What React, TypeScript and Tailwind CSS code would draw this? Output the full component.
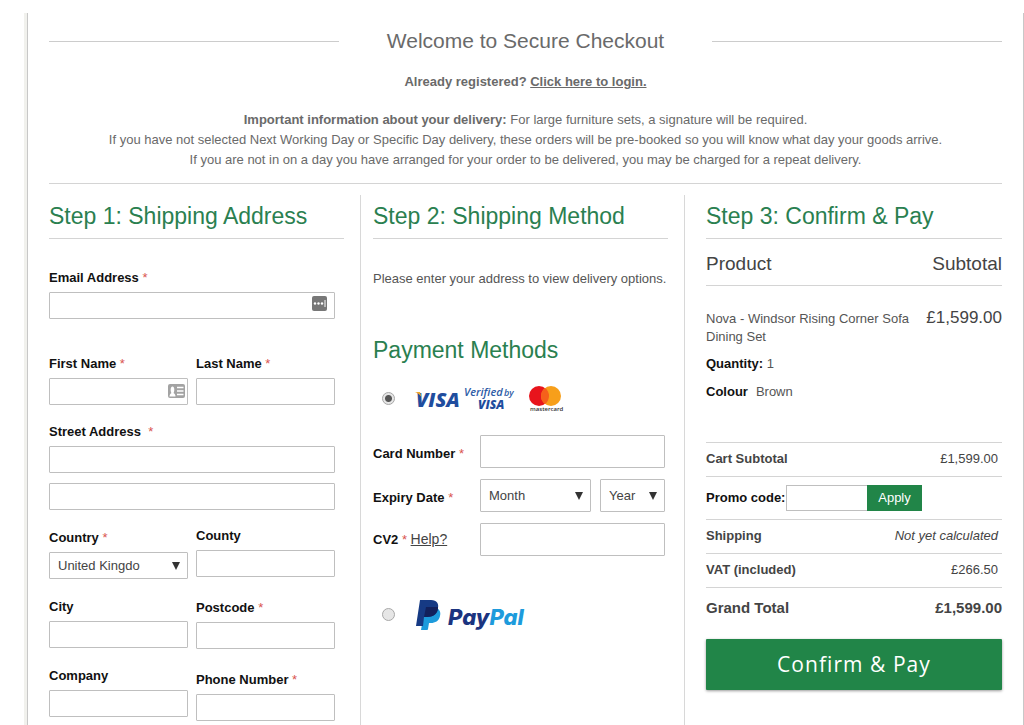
import { useState } from "react";
import type { ReactNode } from "react";

const inputClass = "block w-full border border-[#bfbfbf] rounded-[1px] bg-white px-2 text-[13px] text-[#444] outline-none";

function Star() {
  return <span className="font-normal text-[#d9534f]"> *</span>;
}

function Field({ id, label, required, children }: { id: string; label: string; required?: boolean; children?: ReactNode }) {
  return (
    <div>
      <label htmlFor={id} className="block mb-1 font-bold leading-5 text-[#111]">
        {label}
        {required && <Star />}
      </label>
      <div className="relative">{children || <input id={id} type="text" className={`${inputClass} h-[27px]`} />}</div>
    </div>
  );
}

function Select({ id, label, value, className }: { id: string; label?: string; value: string; className: string }) {
  return (
    <div className="relative">
      <select id={id} aria-label={label} className={`${inputClass} appearance-none ${className}`}>
        <option>{value}</option>
      </select>
      <svg viewBox="0 0 8 8" className="absolute right-2 top-1/2 -mt-1 size-2 pointer-events-none" fill="#333">
        <path d="M0 0h8L4 8z" />
      </svg>
    </div>
  );
}

function StepTitle({ children }: { children: ReactNode }) {
  return <h2 className="border-b border-[#d4d4d4] text-[23px] leading-[43px] text-[#2a8050] whitespace-nowrap">{children}</h2>;
}

function CardLogos() {
  return (
    <svg width="150" height="32" viewBox="0 0 150 32" role="img" aria-label="Visa, Verified by Visa, Mastercard" fontFamily="'Open Sans', sans-serif" fontStyle="italic">
      <text x="1" y="25" fontSize="20" fontWeight="800" fill="#1f4d9e">VISA</text>
      <path d="M0 10h5l2 7C6 13 3 11 0 10z" fill="#f0a92c" />
      <text x="49" y="14" fontSize="11" fontWeight="600" fill="#2b5aa5">Verified</text>
      <text x="89" y="14" fontSize="9" fontWeight="600" fill="#2b5aa5">by</text>
      <text x="63" y="27" fontSize="12" fontWeight="800" fill="#1f4d9e">VISA</text>
      <circle cx="124" cy="14" r="10" fill="#e8141c" />
      <circle cx="136" cy="14" r="10" fill="#f79f1a" />
      <path d="M130 6a10 10 0 0 1 0 16a10 10 0 0 1 0-16z" fill="#f5601b" />
      <text x="115" y="29" fontSize="6" fontWeight="600" fontStyle="normal" fill="#333">mastercard</text>
    </svg>
  );
}

function PayPalLogo() {
  return (
    <svg width="114" height="34" viewBox="0 0 114 34" role="img" aria-label="PayPal" fontFamily="Inter, sans-serif" fontStyle="italic">
      <path d="M10 11h11c4 1 5 5 4 8-1 5-5 7-9 7h-2l-1 6q0 1-1 1H6z" fill="#1d9bdc" />
      <path d="M5 3h11c6 0 8 4 7 8-1 6-5 9-11 9H9L8 29H1z" fill="#163a84" />
      <path d="M11 10h12c.5 6-4 10-11 10H9z" fill="#12215c" />
      <text x="33" y="28" fontSize="22" fontWeight="800" fill="#1b3480">
        Pay<tspan fill="#1d9bdc">Pal</tspan>
      </text>
    </svg>
  );
}

const radioClass =
  "appearance-none size-[13px] shrink-0 rounded-full border border-[#a8a8a8] bg-[#e6e6e6] checked:bg-[radial-gradient(circle,#555_0_3px,#e6e6e6_4px)]";

export default function CheckoutPage() {
  const [method, setMethod] = useState("card");

  return (
    <div className="pt-[13px] pl-[27px] bg-white font-['Liberation_Sans',Arial,sans-serif] text-[13px] text-[#555]">
      <main className="flex flex-col min-h-[calc(100vh-13px)] border-x border-[#c8c8c8] px-[21px] pt-[14px] shadow-[-3px_0_0_#f1f1ed]">
        <header className="border-b border-[#d4d4d4] pb-[13px] text-center leading-5 text-[#6a6a6a]">
          <div className="flex items-center">
            <div className="flex-1 border-t border-[#ccc]" />
            <h1 className="px-12 text-[21px] leading-7">Welcome to Secure Checkout</h1>
            <div className="flex-1 border-t border-[#ccc]" />
          </div>
          <p className="mt-[17px] font-bold">
            Already registered? <a href="#login" className="underline">Click here to login.</a>
          </p>
          <p className="mt-[18px]">
            <strong>Important information about your delivery:</strong> For large furniture sets, a signature will be required.
            <br />
            If you have not selected Next Working Day or Specific Day delivery, these orders will be pre-booked so you will know what day your goods arrive.
            <br />
            If you are not in on a day you have arranged for your order to be delivered, you may be charged for a repeat delivery.
          </p>
        </header>

        <div className="mt-[11px] grid flex-1 grid-cols-[312fr_324fr_317fr]">
          <section className="border-r border-[#d8d8d8] pr-4">
            <StepTitle>Step 1: Shipping Address</StepTitle>
            <div className="mt-[29px] pr-[9px]">
              <Field id="email" label="Email Address" required>
                <input id="email" type="email" className={`${inputClass} h-[27px]`} />
                <svg viewBox="0 0 15 15" className="absolute right-2 top-1 size-[15px]">
                  <rect width="15" height="15" rx="2" fill="#777" />
                  <circle cx="3" cy="7.500" r="1.200" fill="#fff" />
                  <circle cx="6.500" cy="7.500" r="1.200" fill="#fff" />
                  <circle cx="10" cy="7.500" r="1.200" fill="#fff" />
                  <path d="M13 4v7" stroke="#fff" />
                </svg>
              </Field>
              <div className="mt-[35px] grid grid-cols-2 gap-2">
                <Field id="first" label="First Name" required>
                  <input id="first" type="text" className={`${inputClass} h-[27px]`} />
                  <svg viewBox="0 0 17 14" className="absolute right-[3px] top-[6px] w-[17px] h-[14px]">
                    <rect width="17" height="14" rx="2" fill="#a3a3a3" />
                    <path d="M1.500 12.500c0-2 1-3 2-3.500-1-1-1.500-6.500 1-6.500s2 5.500 1 6.500c1 .5 2 1.500 2 3.500z" fill="#fff" />
                    <path d="M9 3.500h6.500M9 7h6.500M9 10.500h6.500" stroke="#fff" strokeWidth="1.500" />
                  </svg>
                </Field>
                <Field id="last" label="Last Name" required />
              </div>
              <div className="mt-[17px]">
                <Field id="street1" label={"Street Address\u00a0"} required />
                <input type="text" aria-label="Street Address line 2" className={`${inputClass} mt-[10px] h-[27px]`} />
              </div>
              {/* the two halves run as independent stacks */}
              <div className="grid grid-cols-2 gap-2">
                <div className="flex flex-col gap-[18px] pt-[18px]">
                  <Field id="country" label="Country" required>
                    <Select id="country" value="United Kingdo" className="h-[27px]" />
                  </Field>
                  <Field id="city" label="City" />
                  <Field id="company" label="Company" />
                </div>
                <div className="flex flex-col gap-[21px] pt-4">
                  <Field id="county" label="County" />
                  <Field id="postcode" label="Postcode" required />
                  <Field id="phone" label="Phone Number" required />
                </div>
              </div>
            </div>
          </section>

          <section className="border-r border-[#d8d8d8] pl-3 pr-4">
            <StepTitle>Step 2: Shipping Method</StepTitle>
            <p className="mt-[30px] leading-5 whitespace-nowrap">Please enter your address to view delivery options.</p>
            <h2 className="mt-[47px] text-[23px] leading-7 text-[#2a8050]">Payment Methods</h2>
            <label className="mt-[18px] flex items-center gap-5 pl-[9px]">
              <input type="radio" name="method" aria-label="Card" className={radioClass} checked={method === "card"} onChange={() => setMethod("card")} />
              <CardLogos />
            </label>
            <div className="mt-[21px] grid grid-cols-[107px_1fr] items-center gap-y-[11px] pr-[3px]">
              <label htmlFor="card" className="pt-1 font-bold text-[#111]">
                Card Number
                <Star />
              </label>
              <input id="card" type="text" className={`${inputClass} h-[33px]`} />
              <label htmlFor="month" className="pt-1 font-bold text-[#111]">
                Expiry Date
                <Star />
              </label>
              <div className="grid grid-cols-[111fr_65fr] gap-[9px]">
                <Select id="month" value="Month" className="h-[33px]" />
                <Select id="year" label="Expiry year" value="Year" className="h-[33px]" />
              </div>
              <div className="text-[#111]">
                <label htmlFor="cv2" className="font-bold">
                  CV2
                  <Star />
                </label>{" "}
                <a href="#cv2-help" className="text-sm text-[#444] underline">Help?</a>
              </div>
              <input id="cv2" type="text" className={`${inputClass} h-[33px]`} />
            </div>
            <label className="mt-[41px] flex items-center gap-5 pl-[9px]">
              <input type="radio" name="method" aria-label="PayPal" className={radioClass} checked={method === "paypal"} onChange={() => setMethod("paypal")} />
              <PayPalLogo />
            </label>
          </section>

          <section className="pl-[21px]">
            <StepTitle>Step 3: Confirm &amp; Pay</StepTitle>
            <table className="w-full">
              <thead>
                <tr className="h-[46px] border-b border-[#d4d4d4] text-[19px] leading-7 text-[#444]">
                  <th className="pt-1 text-left font-normal">Product</th>
                  <th className="pt-1 text-right font-normal">Subtotal</th>
                </tr>
              </thead>
              <tbody className="align-top leading-[18px]">
                <tr>
                  <td className="pt-6">
                    Nova - Windsor Rising Corner Sofa
                    <br />
                    Dining Set
                    <p className="mt-[9px]">
                      <strong className="text-[#111]">Quantity:</strong> 1
                    </p>
                    <p className="mt-[10px] pb-[41px]">
                      <strong className="mr-2 text-[#111]">Colour</strong>Brown
                    </p>
                  </td>
                  <td className="pt-[23px] text-right text-[17px] text-[#444]">£1,599.00</td>
                </tr>
              </tbody>
            </table>
            <table className="w-full text-[#444]">
              <tbody>
                <tr className="h-[34px] border-t border-[#d4d4d4]">
                  <th className="text-left">Cart Subtotal</th>
                  <td className="pr-1 text-right">£1,599.00</td>
                </tr>
                <tr className="h-[43px] border-t border-[#d4d4d4]">
                  <td colSpan={2}>
                    <div className="flex items-center">
                      <label htmlFor="promo" className="w-20 font-bold whitespace-nowrap text-[#111]">Promo code:</label>
                      <input id="promo" type="text" className="h-[26px] w-[81px] border border-r-0 border-[#bfbfbf] px-1 outline-none" />
                      <button type="button" className="h-[26px] w-[55px] bg-[#218548] text-white">Apply</button>
                    </div>
                  </td>
                </tr>
                <tr className="h-[34px] border-t border-[#d4d4d4]">
                  <th className="text-left">Shipping</th>
                  <td className="pr-1 text-right italic">Not yet calculated</td>
                </tr>
                <tr className="h-[34px] border-t border-[#d4d4d4]">
                  <th className="text-left">VAT (included)</th>
                  <td className="pr-1 text-right">£266.50</td>
                </tr>
                <tr className="h-[41px] border-t border-[#d4d4d4] text-[15px] font-bold">
                  <th className="text-left">Grand Total</th>
                  <td className="text-right">£1,599.00</td>
                </tr>
              </tbody>
            </table>
            <button type="button" className="mt-[11px] block h-[51px] w-full rounded-[1px] bg-[#218548] font-['Open_Sans',sans-serif] text-[21px] tracking-wider text-white shadow-[0_1px_3px_rgba(0,0,0,0.4)]">
              Confirm &amp; Pay
            </button>
          </section>
        </div>
      </main>
    </div>
  );
}
